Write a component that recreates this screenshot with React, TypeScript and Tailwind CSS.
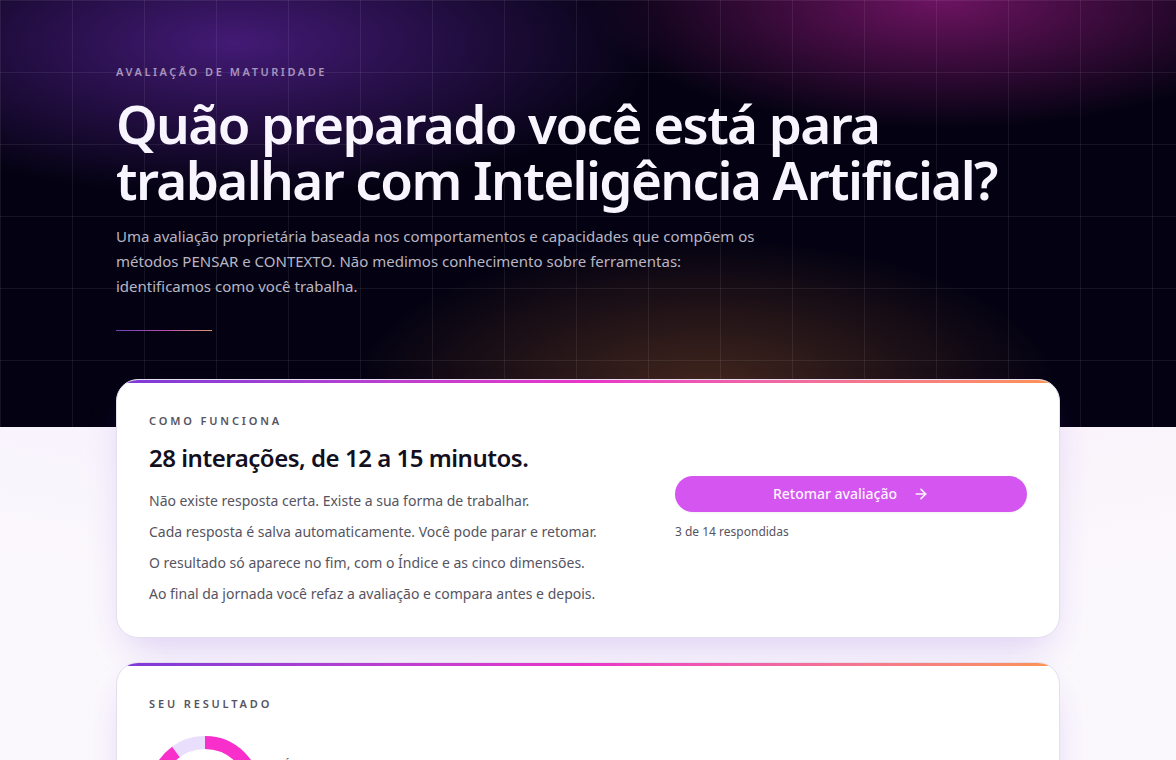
import { ArrowRight } from "lucide-react";
import type { ReactNode } from "react";

const notes = [
  "Não existe resposta certa. Existe a sua forma de trabalhar.",
  "Cada resposta é salva automaticamente. Você pode parar e retomar.",
  "O resultado só aparece no fim, com o Índice e as cinco dimensões.",
  "Ao final da jornada você refaz a avaliação e compara antes e depois.",
];

function Card({ children }: { children: ReactNode }) {
  return (
    <section className="overflow-hidden rounded-[22px] border border-[#e4deef] bg-white shadow-[0_18px_40px_-12px_rgba(109,50,200,0.24)]">
      <div className="h-[3px] bg-linear-to-r from-[#7c3ad8] via-[#ea34c8] to-[#fc9450]" />
      <div className="p-8">{children}</div>
    </section>
  );
}

function CardLabel({ children }: { children: ReactNode }) {
  return (
    <p className="text-[11px] leading-3 font-semibold tracking-[0.26em] text-[#565461] uppercase">{children}</p>
  );
}

function ScoreRing({ value }: { value: number }) {
  return (
    <svg viewBox="0 0 112 112" className="size-28 shrink-0 -rotate-90" role="img" aria-label={`${value}%`}>
      <circle cx="56" cy="56" r="49.5" fill="none" stroke="#e9defb" strokeWidth="13" />
      <circle
        cx="56"
        cy="56"
        r="49.5"
        fill="none"
        stroke="#f92fcc"
        strokeWidth="13"
        pathLength="100"
        strokeDasharray={`${value} 100`}
      />
    </svg>
  );
}

export default function App() {
  return (
    <div className="h-screen overflow-hidden bg-[#fbf8fd] bg-[radial-gradient(ellipse_60%_80%_at_10%_20%,rgba(124,58,237,0.07),transparent_70%),radial-gradient(ellipse_60%_80%_at_90%_20%,rgba(217,50,180,0.07),transparent_70%)] font-['Noto_Sans',sans-serif]">
      <header className="bg-[#040212] bg-[linear-gradient(to_right,rgba(255,255,255,0.07)_1px,transparent_1px),linear-gradient(to_bottom,rgba(255,255,255,0.07)_1px,transparent_1px),radial-gradient(ellipse_60%_60%_at_20%_10%,rgba(130,50,215,0.5),transparent_60%),radial-gradient(ellipse_50%_50%_at_80%_0%,rgba(232,40,190,0.46),transparent_60%),radial-gradient(ellipse_50%_60%_at_60%_92%,rgba(240,140,60,0.27),transparent_60%)] bg-size-[72px_72px,72px_72px,auto,auto,auto]">
        <div className="mx-auto max-w-5xl px-10 pt-16 pb-24">
          <p className="text-[11px] leading-4 font-semibold tracking-[0.23em] text-[#a894bf] uppercase">
            Avaliação de maturidade
          </p>
          <h1 className="mt-4 text-[53px] leading-[56px] font-semibold tracking-[-0.03em] text-[#f8f5ff]">
            Quão preparado você está para trabalhar com Inteligência Artificial?
          </h1>
          <p className="mt-4 max-w-[656px] text-[15px] leading-[25px] text-[#b9b6c3]">
            Uma avaliação proprietária baseada nos comportamentos e capacidades que compõem os métodos PENSAR e
            CONTEXTO. Não medimos conhecimento sobre ferramentas: identificamos como você trabalha.
          </p>
          <div className="mt-[31px] h-px w-24 bg-linear-to-r from-[#6c40c0] via-[#bc48ac] to-[#dc9468]" />
        </div>
      </header>

      <main className="mx-auto -mt-12 flex max-w-5xl flex-col gap-6 px-10">
        <Card>
          <div className="grid grid-cols-[1fr_352px] items-center gap-8">
            <div>
              <CardLabel>Como funciona</CardLabel>
              <h2 className="mt-4 text-2xl leading-[30px] font-semibold tracking-[-0.02em] text-[#120f20]">
                28 interações, de 12 a 15 minutos.
              </h2>
              <ul className="mt-4 flex flex-col gap-2 text-sm leading-[23px] text-[#565461]">
                {notes.map((note) => (
                  <li key={note}>{note}</li>
                ))}
              </ul>
            </div>
            <div className="pb-1">
              <button
                type="button"
                className="flex h-9 w-full items-center justify-center gap-4 rounded-full bg-[#d455f0] text-sm font-medium text-[#fdf4ff] shadow-xs"
              >
                Retomar avaliação
                <ArrowRight className="size-4" strokeWidth={2.5} />
              </button>
              <p className="mt-3 text-xs leading-4 text-[#565461]">3 de 14 respondidas</p>
            </div>
          </div>
        </Card>

        <Card>
          <CardLabel>Seu resultado</CardLabel>
          <div className="mt-[26px] flex gap-6">
            <ScoreRing value={90} />
            <p className="pt-5 text-[11px] leading-4 font-semibold tracking-[0.26em] text-[#565461] uppercase">
              Índice
            </p>
          </div>
        </Card>
      </main>
    </div>
  );
}
